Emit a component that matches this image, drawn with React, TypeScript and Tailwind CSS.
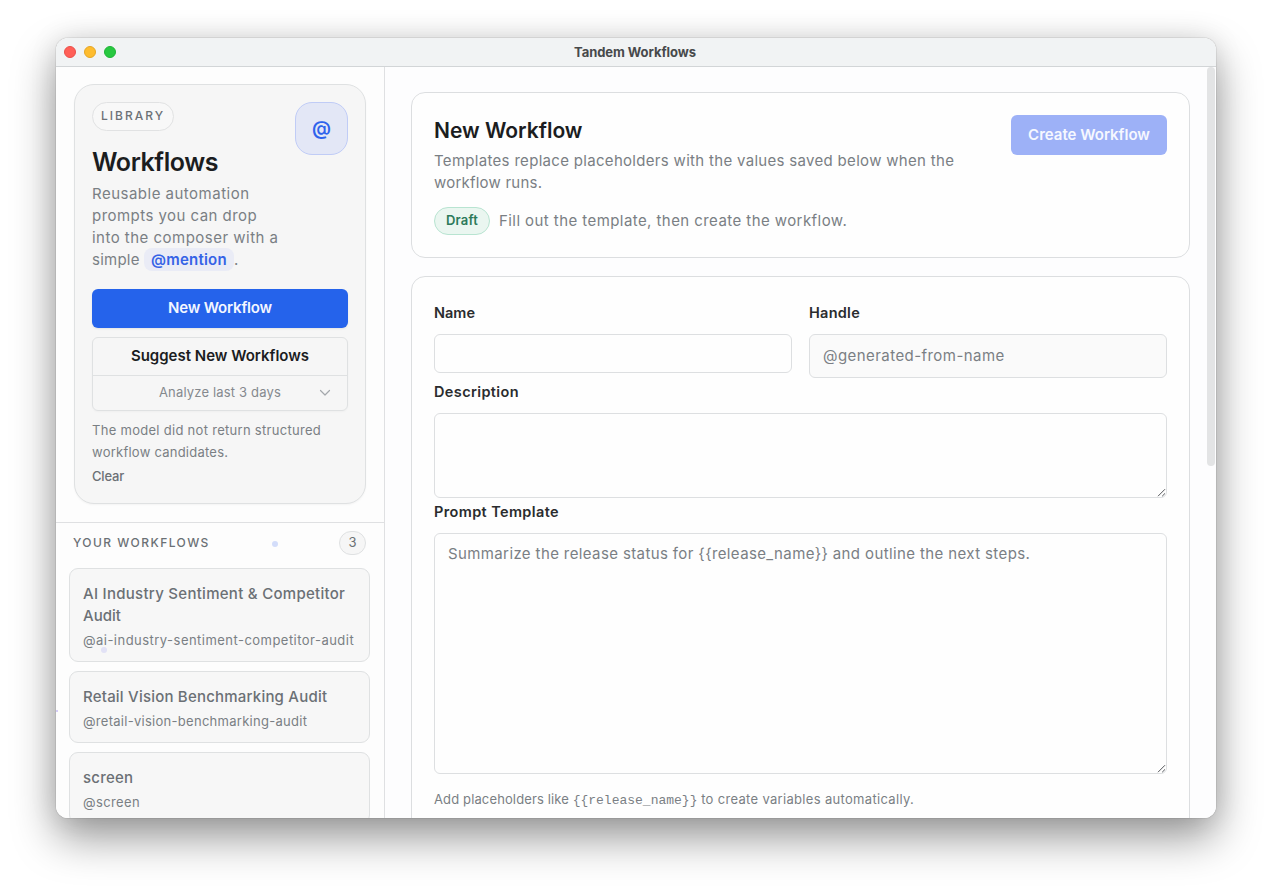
import type { ReactNode } from "react";

type Workflow = { title: ReactNode; handle: string; handleClass: string; height: string };

const workflows: Workflow[] = [
  {
    title: (
      <>
        <span className="tracking-[0.28px]">AI Industry Sentiment &amp; Competitor</span> Audit
      </>
    ),
    handle: "@ai-industry-sentiment-competitor-audit",
    handleClass: "tracking-[0.47px]",
    height: "h-[94px]",
  },
  {
    title: <span className="tracking-[0.21px]">Retail Vision Benchmarking Audit</span>,
    handle: "@retail-vision-benchmarking-audit",
    handleClass: "tracking-[0.28px]",
    height: "h-[72px]",
  },
  {
    title: <span className="tracking-[0.22px]">screen</span>,
    handle: "@screen",
    handleClass: "tracking-[0.4px]",
    height: "h-[72px]",
  },
];

function Grip() {
  return (
    <svg className="pointer-events-none absolute right-[1px] bottom-[1px]" width="9" height="9" viewBox="0 0 9 9">
      <path d="M1 8.2 L8 1.2 M5.2 8.2 L8 5.4" stroke="#55585c" strokeWidth="1" fill="none" />
    </svg>
  );
}

function Sidebar() {
  return (
    <aside className="relative flex w-[329px] shrink-0 flex-col border-r border-[#dfe0e2] bg-[#fdfdfd]">
      <div className="shrink-0 border-b border-[#dfe0e2] px-[18px] pt-[17px] pb-[18px]">
        <section className="h-[420px] rounded-[20px] border border-[#dfe1e2] bg-[#f6f6f6] px-[17px] pt-[17px] shadow-[0_1px_2px_rgba(0,0,0,0.04)]">
          <div className="flex items-start justify-between">
            <div>
              <div className="flex h-[29px] w-[82px] items-center rounded-full border border-[#e1e2e3] bg-[#f8f8f8] pb-[2px] pl-[8px] text-[12px] font-medium leading-none tracking-[2px] text-[#6b7075]">
                LIBRARY
              </div>
              <h1 className="mt-[16px] text-[25px] leading-[30px] font-semibold tracking-[-0.41px] text-[#1b1d1f]">
                Workflows
              </h1>
              <p className="mt-[6px] w-[200px] text-[15px] leading-[22px] whitespace-nowrap text-[#7a7f84]">
                <span className="tracking-[0.49px]">Reusable automation</span>
                <br />
                <span className="tracking-[0.46px]">prompts you can drop</span>
                <br />
                <span className="tracking-[0.48px]">into the composer with a</span>
                <br />
                <span className="tracking-[0.24px]">simple</span>{" "}
                <span className="rounded-[8px] bg-[#eaecf6] px-[7px] py-[2px] font-semibold tracking-[0.24px] text-[#3563e6]">
                  @mention
                </span>
                .
              </p>
            </div>
            <div className="flex size-[53px] shrink-0 items-center justify-center rounded-[17px] border border-[#c0ccf6] bg-[#e3e7f6] text-[19px] font-semibold leading-none text-[#2f63ec]">
              @
            </div>
          </div>

          <button className="mt-[18px] flex h-[39px] w-full items-center justify-center rounded-[6px] bg-[#2563eb] text-[15px] font-semibold tracking-[-0.17px] text-[#f3f6ff] shadow-[0_1px_2px_rgba(0,0,0,0.08)]">
            New Workflow
          </button>

          <div className="mt-[9px] h-[74px] rounded-[6px] border border-[#dfe1e2] shadow-[0_1px_2px_rgba(0,0,0,0.03)]">
            <button className="flex h-[38px] w-full items-center justify-center border-b border-[#dfe1e2] text-[15px] font-semibold text-[#1b1d1f]">
              Suggest New Workflows
            </button>
            <div className="relative flex h-[34px] items-center justify-center text-[13px] tracking-[0.17px] text-[#85898e]">
              Analyze last 3 days
              <svg className="absolute right-[16px]" width="12" height="8" viewBox="0 0 12 8">
                <path d="M1.5 1.5 L6 6 L10.5 1.5" fill="none" stroke="#a4a8ac" strokeWidth="1.2" strokeLinecap="round" strokeLinejoin="round" />
              </svg>
            </div>
          </div>

          <p className="mt-[8px] text-[13px] leading-[22px] whitespace-nowrap text-[#7a7f84]">
            <span className="tracking-[0.29px]">The model did not return structured</span>
            <br />
            <span className="tracking-[0.24px]">workflow candidates.</span>
          </p>
          <button className="mt-[2px] block text-[13px] leading-[22px] font-medium tracking-[-0.2px] text-[#6b7075]">
            Clear
          </button>
        </section>
      </div>

      <div className="flex h-[45px] shrink-0 items-start justify-between pt-2 pr-[18px] pl-[17px]">
        <h2 className="text-[12px] leading-[24px] font-medium tracking-[1.45px] text-[#6b7075]">YOUR WORKFLOWS</h2>
        <span className="flex h-[24px] w-[27px] items-center justify-center rounded-full border border-[#dfe1e2] bg-[#f6f6f6] text-[13px] text-[#6b7075]">
          3
        </span>
      </div>

      <div className="flex flex-col gap-[9px] pr-[14px] pl-[13px]">
        {workflows.map((w) => (
          <article
            key={w.handle}
            className={`shrink-0 rounded-[9px] border border-[#dfe1e2] bg-[#f7f7f7] pt-[14px] pl-[13px] ${w.height}`}
          >
            <h3 className="text-[15px] leading-[22px] font-medium text-[#6b7075]">{w.title}</h3>
            <p className={`mt-[2px] text-[13px] leading-[22px] whitespace-nowrap text-[#7a7f84] ${w.handleClass}`}>
              {w.handle}
            </p>
          </article>
        ))}
      </div>

      <i className="absolute top-[474px] left-[216px] size-[6px] rounded-full bg-[#d3ddfa]" />
      <i className="absolute top-[580px] left-[45px] size-[6px] rounded-full bg-[#e2e2f6]" />
      <i className="absolute top-[643px] left-0 h-[2px] w-[2px] bg-[#d5cdf8]" />
    </aside>
  );
}

function Header() {
  return (
    <section className="flex h-[166px] shrink-0 items-start justify-between rounded-[14px] border border-[#dcdee0] bg-[#fefefe] p-[22px]">
      <div>
        <h2 className="mt-[2px] text-[21px] leading-[28px] font-semibold text-[#1b1d1f]">New Workflow</h2>
        <p className="mt-[5px] text-[15px] leading-[22px] whitespace-nowrap text-[#7a7f84]">
          <span className="tracking-[0.31px]">
            Templates replace placeholders with the values saved below when the
          </span>
          <br />
          <span className="tracking-[0.22px]">workflow runs.</span>
        </p>
        <div className="mt-[13px] flex items-center gap-[9px]">
          <span className="flex h-[28px] w-[56px] items-center justify-center rounded-full border border-[#b8e4d1] bg-[#eaf6f0] text-[13px] font-semibold tracking-[0.2px] text-[#2c7a5a]">
            Draft
          </span>
          <span className="text-[15px] leading-[22px] tracking-[0.43px] text-[#7a7f84]">
            Fill out the template, then create the workflow.
          </span>
        </div>
      </div>
      <button className="flex h-[40px] w-[156px] items-center justify-center rounded-[6px] bg-[#9db1f7] text-[15px] font-semibold text-[#f6f8ff]">
        Create Workflow
      </button>
    </section>
  );
}

function Form() {
  const label = "block text-[14.5px] leading-[22px] font-semibold text-[#2a2c2e]";
  const field = "block w-full rounded-[6px] border border-[#dddfe1] placeholder:text-[#7a7f84] placeholder:opacity-100";
  return (
    <section className="h-[700px] shrink-0 rounded-[14px] border border-[#dcdee0] bg-[#fefefe] px-[22px] pt-[25px]">
      <div className="grid grid-cols-2 gap-[17px]">
        <div>
          <label className={label}>Name</label>
          <input className={`mt-[10px] h-[39px] bg-[#fefefe] ${field}`} />
        </div>
        <div>
          <label className={`tracking-[0.26px] ${label}`}>Handle</label>
          <input
            readOnly
            placeholder="@generated-from-name"
            className={`mt-[10px] h-[44px] bg-[#fafafa] px-[13px] pb-[2px] text-[15px] tracking-[0.44px] ${field}`}
          />
        </div>
      </div>
      <label className={`mt-[3px] tracking-[0.38px] ${label}`}>Description</label>
      <div className="relative mt-[10px] h-[85px]">
        <textarea className={`h-full resize-none bg-[#fefefe] ${field}`} />
        <Grip />
      </div>
      <label className={`mt-[3px] tracking-[0.38px] ${label}`}>Prompt Template</label>
      <div className="relative mt-[10px] h-[241px]">
        <textarea
          placeholder="Summarize the release status for {{release_name}} and outline the next steps."
          className={`h-full resize-none bg-[#fefefe] px-[13px] py-[9px] text-[15px] leading-[22px] tracking-[0.385px] ${field}`}
        />
        <Grip />
      </div>
      <p className="mt-[14px] text-[13px] leading-[22px] whitespace-nowrap text-[#7a7f84]">
        <span className="tracking-[0.13px]">Add placeholders like</span>{" "}
        <code className="font-['Liberation_Mono',monospace] text-[13px]">{"{{release_name}}"}</code>{" "}
        <span className="tracking-[0.32px]">to create variables automatically.</span>
      </p>
    </section>
  );
}

export default function App() {
  return (
    <div className="h-[892px] w-[1272px] overflow-hidden bg-white px-[56px] pt-[38px] font-[Inter,sans-serif]">
      <div className="h-[780px] w-[1160px] rounded-[12px] shadow-[0_0_1px_rgba(0,0,0,0.65),0_20px_44px_rgba(0,0,0,0.4),0_0_28px_rgba(0,0,0,0.1)]">
        <div className="flex h-full flex-col overflow-hidden rounded-[12px] bg-[#fdfdfd]">
          <header className="grid h-[29px] shrink-0 grid-cols-[1fr_auto_1fr] items-center border-b border-[#d2d5d7] bg-[#f1f3f4] px-2">
            <div className="flex gap-2">
              <span className="size-3 rounded-full border border-[#ea4f49] bg-[#ff5f57]" />
              <span className="size-3 rounded-full border border-[#e5a624] bg-[#febc2e]" />
              <span className="size-3 rounded-full border border-[#1fb436] bg-[#28c840]" />
            </div>
            <span className="mr-[2px] text-[13px] leading-none font-bold tracking-[-0.06px] text-[#47494b]">Tandem Workflows</span>
          </header>
          <div className="flex min-h-0 flex-1">
            <Sidebar />
            <main className="relative flex min-w-0 flex-1 flex-col gap-[18px] overflow-hidden bg-[#fdfdfe] pt-[25px] pr-[26px] pl-[26px]">
              <Header />
              <Form />
              <div className="absolute top-0 right-[1px] h-[399px] w-[8px] rounded-full bg-[#e3e4e5]" />
            </main>
          </div>
        </div>
      </div>
    </div>
  );
}
